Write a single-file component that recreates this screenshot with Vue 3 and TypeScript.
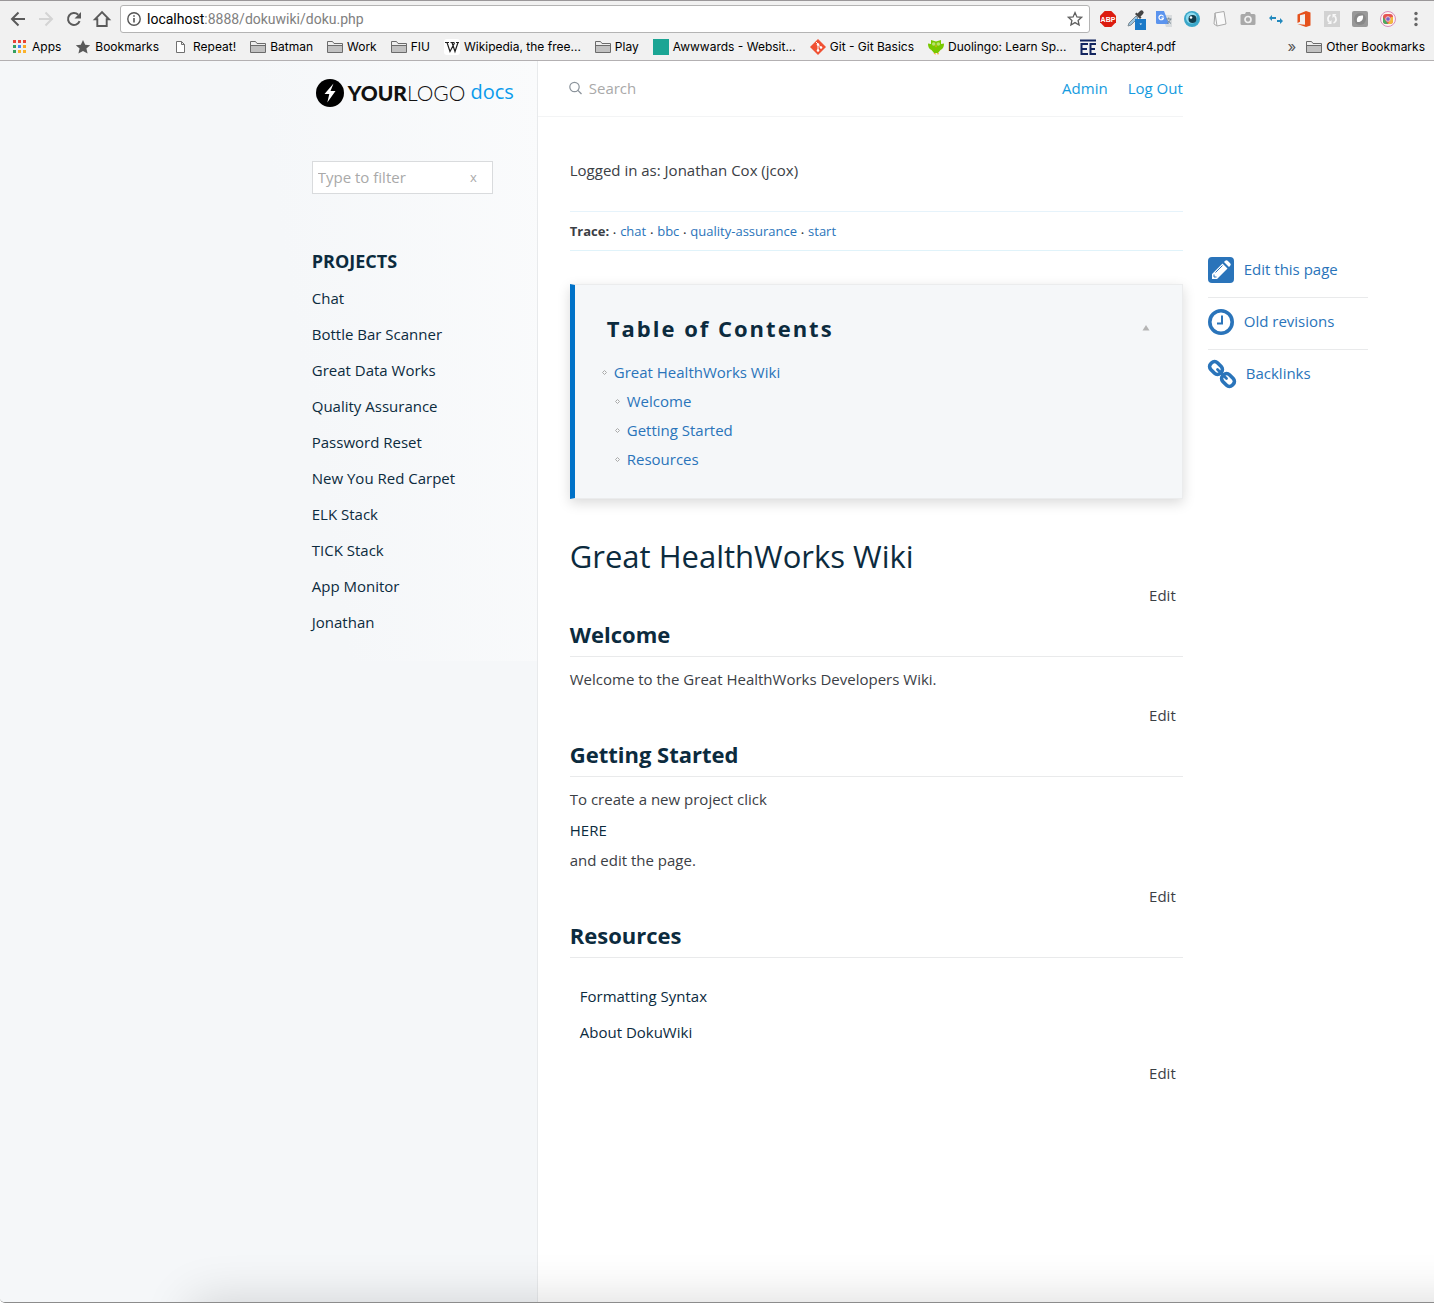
<script setup lang="ts">
import { ref } from 'vue'

interface Bookmark {
  label: string
  icon: string
}

const url = ref('')
const search = ref('')
const filter = ref('')

const bookmarks: Bookmark[] = [
  { label: 'Apps', icon: 'apps' },
  { label: 'Bookmarks', icon: 'star' },
  { label: 'Repeat!', icon: 'page' },
  { label: 'Batman', icon: 'folder' },
  { label: 'Work', icon: 'folder' },
  { label: 'FIU', icon: 'folder' },
  { label: 'Wikipedia, the free...', icon: 'wiki' },
  { label: 'Play', icon: 'folder' },
  { label: 'Awwwards - Websit...', icon: 'teal' },
  { label: 'Git - Git Basics', icon: 'git' },
  { label: 'Duolingo: Learn Sp...', icon: 'duo' },
  { label: 'Chapter4.pdf', icon: 'ee' },
]

const extensions: string[] = [
  'AdBlock', 'Eye dropper', 'Translate', 'Eye', 'Notes', 'Camera',
  'Arrows', 'Office', 'Refresh', 'Leaf', 'Lens', 'Menu',
]

const appColors: string[] = [
  '#ea4335', '#ea4335', '#ea4335', '#34a060', '#4285f4', '#f9a825', '#34a060', '#fbb22b', '#fbb22b',
]

const projects: string[] = [
  'Chat', 'Bottle Bar Scanner', 'Great Data Works', 'Quality Assurance', 'Password Reset',
  'New You Red Carpet', 'ELK Stack', 'TICK Stack', 'App Monitor', 'Jonathan',
]

const trace: string[] = ['chat', 'bbc', 'quality-assurance', 'start']
const tocItems: string[] = ['Welcome', 'Getting Started', 'Resources']
</script>

<template>
  <div class="window">
    <header class="chrome">
      <div class="toolbar">
        <button class="cell" aria-label="Back">
          <svg width="16" height="16" viewBox="0 0 16 16"><path d="M15 8H2.500M8.500 1.500L2 8l6.500 6.500" fill="none" stroke="#5a5a5a" stroke-width="2" /></svg>
        </button>
        <button class="cell" aria-label="Forward">
          <svg width="16" height="16" viewBox="0 0 16 16"><path d="M1 8h12.500M7.500 1.500L14 8l-6.500 6.500" fill="none" stroke="#d4d4d4" stroke-width="2" /></svg>
        </button>
        <button class="cell" aria-label="Reload">
          <svg width="16" height="16" viewBox="0 0 16 16"><path d="M13.600 10.200A6 6 0 1 1 12.200 3.700" fill="none" stroke="#5a5a5a" stroke-width="2" /><path d="M15 1v6.500H8.500z" fill="#5a5a5a" /></svg>
        </button>
        <button class="cell" aria-label="Home">
          <svg width="18" height="18" viewBox="0 0 18 18"><path d="M9 2.200L2 9.300h2.300V16h9.400V9.300H16z" fill="none" stroke="#5a5a5a" stroke-width="1.900" /></svg>
        </button>
        <div class="omnibox">
          <svg width="14" height="14" viewBox="0 0 14 14"><circle cx="7" cy="7" r="6.200" fill="none" stroke="#555" stroke-width="1.400" /><path d="M7 6v4.500M7 3.300v1.500" stroke="#555" stroke-width="1.600" /></svg>
          <label class="address">
            <span>localhost<i>:8888/dokuwiki/doku.php</i></span>
            <input v-model="url" aria-label="Address" />
          </label>
          <button class="bare" aria-label="Bookmark this page">
            <svg width="16" height="16" viewBox="0 0 16 16"><path d="M8 1.600l1.900 4.300 4.700.4-3.500 3.100 1 4.600L8 11.600 3.900 14l1-4.600L1.400 6.300l4.700-.4z" fill="none" stroke="#5f5f5f" stroke-width="1.300" /></svg>
          </button>
        </div>
        <div class="extensions">
          <button v-for="(name, i) in extensions" :key="name" class="cell" :aria-label="name">
            <svg width="20" height="20" viewBox="0 0 20 20">
              <g v-if="i === 0">
                <path d="M6.700 2h6.600L18 6.700v6.600L13.300 18H6.700L2 13.300V6.700z" fill="#dc1c10" />
                <text x="10" y="12.800" font-size="7" font-weight="700" text-anchor="middle" fill="#fff" font-family="Liberation Sans, sans-serif">ABP</text>
              </g>
              <g v-else-if="i === 1">
                <path d="M2 17l1-3 7-7 2 2-7 7z" fill="#9cc4df" stroke="#7c8b95" />
                <path d="M9 5l5 5 1.500-1.500-1-1L17 5a2 2 0 0 0-3-3l-2.500 2.500-1-1z" fill="#444" />
                <path d="M9 10h11v11H9z" fill="#1b7ac8" /><path d="M13.500 14.500h2.500l-1.200 1.600z" fill="#fff" />
              </g>
              <g v-else-if="i === 2">
                <path d="M8 6h10v12h-6z" fill="#d9dcde" />
                <path d="M2 2h8l5 13H3.500A1.500 1.500 0 0 1 2 13.500z" fill="#5b94ee" />
                <path d="M9.400 7.600A2.300 2.300 0 1 0 9.500 9H7.300" fill="none" stroke="#fff" stroke-width="1.200" />
                <path d="M12 10h5.500M14.700 8.500V10M16.500 10c-.5 2-2 3.500-3.500 4.500M13.500 11.500l3.500 3" stroke="#7a8a95" fill="none" />
              </g>
              <g v-else-if="i === 3">
                <circle cx="10" cy="10" r="8" fill="#3aa7c9" /><circle cx="9.500" cy="9" r="5.500" fill="#8edcf0" />
                <circle cx="10.500" cy="10" r="4" fill="#123d4c" /><circle cx="9" cy="8.500" r="1.300" fill="#fff" />
              </g>
              <path v-else-if="i === 4" d="M5 4l9-1.500 2 12.500-9 2zM5 4L4 15l3 2" fill="#fafafa" stroke="#aaa" />
              <g v-else-if="i === 5">
                <path d="M4 5h3l1-2h4l1 2h3a1.500 1.500 0 0 1 1.500 1.500v8A1.500 1.500 0 0 1 16 16H4a1.500 1.500 0 0 1-1.500-1.500v-8A1.500 1.500 0 0 1 4 5z" fill="#a9a9a9" />
                <circle cx="10" cy="10.500" r="3" fill="none" stroke="#f1f1f1" stroke-width="1.700" />
              </g>
              <path v-else-if="i === 6" d="M10 8H6V6L3 9l3 3v-2h4zM11 11h3V9l3 3-3 3v-2h-3z" fill="#2389bd" />
              <path v-else-if="i === 7" d="M3.500 5.500L12 2l4.500 1.500v13L12 18l-8.500-3 7.500.8V5L6 6.300v6.500l-2.500 1.200z" fill="#e5521d" />
              <g v-else-if="i === 8">
                <path d="M2 2h16v16H2z" fill="#d2d2d2" />
                <path d="M8.500 6C5.500 7 5 11 7.500 13M11.500 14C14.500 13 15 9 12.500 7" stroke="#f8f8f8" stroke-width="1.800" fill="none" />
                <path d="M9.500 11v4H5.500zM10.500 9V5h4z" fill="#f8f8f8" />
              </g>
              <g v-else-if="i === 9">
                <rect x="2" y="2" width="16" height="16" rx="2" fill="#999" /><circle cx="10" cy="10" r="6" fill="#888" />
                <path d="M7.200 13c-1.200-4 .8-7 5.800-6.500.5 4.500-2 7-5.800 6.500z" fill="#fff" />
              </g>
              <g v-else-if="i === 10">
                <circle cx="10" cy="10" r="7.500" fill="#fdf3f0" stroke="#d98cba" />
                <rect x="5" y="5" width="10" height="10" rx="3" fill="#e65452" /><path d="M5 8l5 7H8a3 3 0 0 1-3-3z" fill="#45ad62" /><path d="M15 8v4a3 3 0 0 1-3 3h-2l3-7z" fill="#f1bc3c" />
                <circle cx="10" cy="10" r="2.300" fill="#7a62c9" stroke="#e9c6d0" />
              </g>
              <g v-else fill="#666"><circle cx="10" cy="4.500" r="1.700" /><circle cx="10" cy="10" r="1.700" /><circle cx="10" cy="15.500" r="1.700" /></g>
            </svg>
          </button>
        </div>
      </div>
      <nav class="bookmarks">
        <a v-for="b in bookmarks" :key="b.label" href="#" class="bookmark">
          <svg width="16" height="16" viewBox="0 0 16 16">
            <g v-if="b.icon === 'apps'">
              <rect v-for="(c, i) in appColors" :key="i" :x="1 + (i % 3) * 5" :y="1 + Math.floor(i / 3) * 5" width="3" height="3" :fill="c" />
            </g>
            <path v-else-if="b.icon === 'star'" d="M8 1l2.200 4.700 5 .5-3.800 3.400 1.200 5L8 12l-4.600 2.600 1.200-5L.8 6.200l5-.5z" fill="#595959" />
            <path v-else-if="b.icon === 'page'" d="M3.500 2.500h5l3 3v8h-8zM8.500 2.500v3h3" fill="#fff" stroke="#707070" />
            <g v-else-if="b.icon === 'folder'">
              <path d="M.5 13.500v-11h5l1.500 2h8.500v9z" fill="#eee" stroke="#6b6b6b" /><path d="M1 7h14v6H1z" fill="#c1c1c1" /><path d="M1 6.500h14" stroke="#6b6b6b" />
            </g>
            <g v-else-if="b.icon === 'wiki'">
              <rect width="16" height="16" rx="3" fill="#fff" />
              <path d="M1 3.500h4M6.500 3.500h4M12 3.500h3M3 3.500l3 9L10.500 4M8 3.500l3 9 3-9" fill="none" stroke="#222" stroke-width="1.200" />
            </g>
            <path v-else-if="b.icon === 'teal'" d="M0 0h16v16H0z" fill="#1ba594" />
            <g v-else-if="b.icon === 'git'">
              <path d="M8 0l8 8-8 8-8-8z" fill="#f05133" /><path d="M6 3l2 2v6M8 5.500L11 8.500" stroke="#fff" fill="none" /><circle cx="8" cy="5.500" r="1.300" fill="#fff" /><circle cx="8" cy="11.500" r="1.300" fill="#fff" /><circle cx="11" cy="8.500" r="1.300" fill="#fff" />
            </g>
            <g v-else-if="b.icon === 'duo'">
              <path d="M3 1l5 1.500L13 1v4l3-.5c0 4-1.500 5.500-3.500 6.500L10 14H6l-2.500-3C1.500 10 0 8.500 0 4.500L3 5z" fill="#78c800" />
              <circle cx="5.700" cy="5" r="1.800" fill="#b9e36a" /><circle cx="10.300" cy="5" r="1.800" fill="#b9e36a" /><path d="M7 6.500h2L8 8.500zM5.500 14h2v2zM9 14h2l-1 2z" fill="#f5a623" />
            </g>
            <path v-else d="M0 1.500h16M8 5H1.500v10H8M1.500 10H7M16 5h-5.500v10H16M10.500 10H15" fill="none" stroke="#13255f" stroke-width="2" />
          </svg>
          <span>{{ b.label }}</span>
        </a>
        <button class="more bare" aria-label="More bookmarks">»</button>
        <a href="#" class="bookmark other">
          <svg width="16" height="16" viewBox="0 0 16 16"><path d="M.5 13.500v-11h5l1.500 2h8.500v9z" fill="#eee" stroke="#6b6b6b" /><path d="M1 7h14v6H1z" fill="#c1c1c1" /><path d="M1 6.500h14" stroke="#6b6b6b" /></svg>
          <span>Other Bookmarks</span>
        </a>
      </nav>
    </header>

    <div class="site">
      <aside class="sidebar">
        <div class="sidebar-inner">
          <a href="#" class="logo">
            <svg width="28" height="28" viewBox="0 0 28 28"><circle cx="14" cy="14" r="14" fill="#000" /><path d="M17.500 4.500L8.500 15h4.800l-2 8.500L19.500 12h-5z" fill="#fff" /></svg>
            <span class="wordmark"><b>YOUR</b>LOGO</span>
            <span class="docs">docs</span>
          </a>
          <form class="filter" @submit.prevent>
            <input v-model="filter" placeholder="Type to filter" aria-label="Type to filter" />
            <button class="bare" type="button" @click="filter = ''">x</button>
          </form>
          <h4>PROJECTS</h4>
          <ul class="projects">
            <li v-for="p in projects" :key="p"><a href="#">{{ p }}</a></li>
          </ul>
        </div>
      </aside>

      <main class="content">
        <div class="topbar">
          <label class="search">
            <svg width="14" height="14" viewBox="0 0 14 14"><circle cx="5.500" cy="6" r="4.700" fill="none" stroke="#8b939b" stroke-width="1.200" /><path d="M8.900 9.400L12.500 13" stroke="#8b939b" stroke-width="1.300" /></svg>
            <input v-model="search" placeholder="Search" aria-label="Search" />
          </label>
          <nav class="account"><a href="#">Admin</a><a href="#">Log Out</a></nav>
        </div>

        <div class="body">
          <p class="user">Logged in as: Jonathan Cox (jcox)</p>
          <div class="trace">
            <b>Trace:</b>
            <span v-for="t in trace" :key="t"><i>•</i><a href="#">{{ t }}</a></span>
          </div>

          <section class="toc">
            <div class="toc-head">
              <h3>Table of Contents</h3>
              <button class="bare" aria-label="Collapse">
                <svg width="8" height="6" viewBox="0 0 8 6"><path d="M4 0l3.500 5.500h-7z" fill="#b5b5b5" /></svg>
              </button>
            </div>
            <ul>
              <li>
                <svg width="5" height="5" viewBox="0 0 5 5"><path d="M2.500.5l2 2-2 2-2-2z" fill="none" stroke="#aaa" /></svg>
                <a href="#">Great HealthWorks Wiki</a>
              </li>
              <li v-for="t in tocItems" :key="t" class="nested">
                <svg width="5" height="5" viewBox="0 0 5 5"><path d="M2.500.5l2 2-2 2-2-2z" fill="none" stroke="#aaa" /></svg>
                <a href="#">{{ t }}</a>
              </li>
            </ul>
          </section>

          <h1>Great HealthWorks Wiki</h1>
          <button class="edit">Edit</button>

          <h2>Welcome</h2>
          <p>Welcome to the Great HealthWorks Developers Wiki.</p>
          <button class="edit">Edit</button>

          <h2>Getting Started</h2>
          <p>To create a new project click</p>
          <p class="follow"><a href="#">HERE</a></p>
          <p class="follow">and edit the page.</p>
          <button class="edit">Edit</button>

          <h2>Resources</h2>
          <ul class="resources">
            <li><a href="#">Formatting Syntax</a></li>
            <li><a href="#">About DokuWiki</a></li>
          </ul>
          <button class="edit">Edit</button>
        </div>
      </main>

      <nav class="tools">
        <a href="#">
          <svg width="26" height="26" viewBox="0 0 26 26"><rect width="26" height="26" rx="4" fill="#2a74ba" /><path d="M4 22v-5L14.500 6.500l5 5L9 22zM16 5l1.200-1.200a1.800 1.800 0 0 1 2.500 0l2.500 2.500a1.800 1.800 0 0 1 0 2.500L21 10z" fill="#fff" /><path d="M7.500 15.500l7-7" stroke="#2a74ba" /><path d="M6 17.500v2.500h2.500" stroke="#2a74ba" fill="none" /></svg>
          <span>Edit this page</span>
        </a>
        <a href="#">
          <svg width="26" height="26" viewBox="0 0 26 26"><circle cx="13" cy="13" r="11.200" fill="none" stroke="#2a74ba" stroke-width="3.600" /><path d="M14 6.500V14.500H9" fill="none" stroke="#2a74ba" stroke-width="2" /></svg>
          <span>Old revisions</span>
        </a>
        <a href="#">
          <svg width="28" height="28" viewBox="0 0 28 28"><g fill="none" stroke="#2a74ba" stroke-width="3.600"><rect x="1.300" y="3.300" width="13.400" height="9.400" rx="4" transform="rotate(45 8 8)" /><rect x="13.300" y="15.300" width="13.400" height="9.400" rx="4" transform="rotate(45 20 20)" /><path d="M9.500 9.500l9 9" stroke-width="2.800" stroke-linecap="round" /></g></svg>
          <span>Backlinks</span>
        </a>
      </nav>
    </div>
  </div>
</template>

<style>
body {
  margin: 0;
  background: #fff;
}
</style>

<style scoped>
.window {
  position: relative;
  display: flex;
  flex-direction: column;
  min-height: 100vh;
  box-sizing: border-box;
  overflow: hidden;
  border-bottom: 1px solid #8c8c8c;
  border-bottom-left-radius: 5px;
  color: #3b4045;
  font: 15px/24px "Open Sans", sans-serif;
}
/* soft shadow cast along the lower edge of the window */
.window::after {
  content: "";
  position: absolute;
  left: 192px;
  right: -80px;
  bottom: -80px;
  height: 80px;
  box-shadow: 0 0 50px rgba(0, 0, 0, 0.16);
  pointer-events: none;
}
a {
  color: inherit;
  text-decoration: none;
}
ul {
  list-style: none;
  margin: 0;
  padding: 0;
}
h1, h2, h3, h4, p {
  margin: 0;
}
i {
  font-style: normal;
}
svg {
  display: block;
  flex: none;
  overflow: visible;
}
input {
  min-width: 0;
  border: 0;
  padding: 0;
  outline: 0;
  background: transparent;
  color: inherit;
  font: inherit;
}
input::placeholder {
  color: #a9a9a9;
  opacity: 1;
}
button {
  border: 0;
  padding: 0;
  background: none;
  color: inherit;
  font: inherit;
}

.chrome {
  background: #f1f1f1;
  border-top: 1px solid #9a9799;
  border-bottom: 1px solid #b3b0b2;
  color: #000;
}
.toolbar {
  display: flex;
  align-items: center;
  padding: 4px 4px 0;
}
.cell {
  display: flex;
  align-items: center;
  justify-content: center;
  width: 28px;
  height: 28px;
}
.omnibox {
  display: flex;
  flex: 1;
  align-items: center;
  gap: 6px;
  height: 28px;
  margin: 0 4px;
  padding: 0 6px;
  box-sizing: border-box;
  border: 1px solid #b4b4b4;
  border-radius: 3px;
  background: #fff;
}
.address {
  display: flex;
  flex: 1;
  font: 14px/18px Roboto, sans-serif;
}
.address span {
  padding-right: 4px;
}
.address i {
  color: #808080;
}
.address input {
  flex: 1;
}
.extensions {
  display: flex;
}
.bookmarks {
  display: flex;
  align-items: center;
  gap: 14px;
  height: 27px;
  padding: 0 9px 0 12px;
  font: 12px/16px Inter, sans-serif;
}
.bookmark {
  display: flex;
  align-items: center;
  gap: 4px;
  white-space: nowrap;
}
.more {
  margin-left: auto;
  margin-right: -4px;
  color: #555;
  font-size: 15px;
}

.site {
  display: flex;
  flex: 1;
}
.sidebar {
  display: flex;
  justify-content: flex-end;
  width: 37.5%;
  box-sizing: border-box;
  border-right: 1px solid #e8eaec;
  background: linear-gradient(81deg, #f5f7f9 55%, #fafbfc) 0 0 / 100% 600px no-repeat #f5f7f9;
  color: #0c2b3e;
}
.sidebar-inner {
  width: 225px;
  padding-top: 18px;
}
.logo {
  display: flex;
  align-items: center;
  height: 28px;
  padding-left: 4px;
}
.wordmark {
  margin: 0 5px 0 4px;
  color: #111;
  font: 300 21px/28px Lato, sans-serif;
}
.wordmark b {
  font-weight: 900;
}
.docs {
  padding-bottom: 2px;
  color: #0b9bec;
  font-size: 20px;
}
.filter {
  display: flex;
  width: 181px;
  height: 33px;
  margin-top: 54px;
  padding: 0 15px 2px 5px;
  box-sizing: border-box;
  border: 1px solid #d9dbdd;
  background: #fff;
}
.filter input {
  flex: 1;
}
.filter button {
  color: #aaa;
  font-size: 13px;
}
h4 {
  margin-top: 55px;
  font-size: 18px;
  line-height: 24px;
}
.projects {
  display: grid;
  gap: 12px;
  margin-top: 13px;
}

.content {
  flex: 0 1 645px;
}
.topbar {
  display: flex;
  justify-content: space-between;
  align-items: center;
  height: 53px;
  padding: 0 0 2px 31px;
  border-bottom: 1px solid #f3f4f5;
}
.search {
  display: flex;
  align-items: center;
  gap: 6px;
}
.account {
  display: flex;
  gap: 20px;
  color: #159be0;
}
.body {
  display: flex;
  flex-direction: column;
  padding: 41px 0 60px 32px;
}
.trace {
  display: flex;
  margin-top: 29px;
  padding: 7px 0;
  border-top: 1px solid #e6f3fb;
  border-bottom: 1px solid #e0f3fa;
  font-size: 13px;
}
.trace i {
  padding: 0 4px;
  font-size: 8px;
  line-height: 8px;
}
.trace a,
.toc a,
.tools {
  color: #2a74ba;
}
.toc {
  margin-top: 33px;
  padding: 27px 32px 24px 27px;
  border: 1px solid #ebeced;
  border-left: 5px solid #0072c8;
  background: #f5f7f9;
  box-shadow: 0 4px 12px rgba(0, 0, 0, 0.15);
}
.toc-head {
  display: flex;
  align-items: center;
  justify-content: space-between;
  padding-left: 5px;
}
h3 {
  color: #0c2b3e;
  font-size: 22px;
  line-height: 32px;
  letter-spacing: 2px;
}
.toc ul {
  margin-top: 14px;
}
.toc li {
  display: flex;
  align-items: center;
  gap: 7px;
  line-height: 29px;
}
.toc .nested {
  padding-left: 13px;
}
h1 {
  margin-top: 37px;
  color: #0c2b3e;
  font-size: 31px;
  font-weight: 400;
  line-height: 40px;
}
.edit {
  align-self: flex-end;
  margin: 12px 7px 0 0;
}
h1 + .edit {
  margin-top: 7px;
}
h2 {
  margin: 12px 0 10px;
  padding-bottom: 7px;
  border-bottom: 1px solid #e9eaeb;
  color: #0c2b3e;
  font-size: 22px;
  line-height: 30px;
}
.follow {
  margin-top: 7px;
}
.follow + .follow {
  margin-top: 6px;
}
.follow a,
.resources {
  color: #0c2b3e;
}
.resources {
  display: grid;
  gap: 12px;
  padding: 16px 10px 5px;
}
.tools {
  width: 160px;
  margin: 185px 0 0 25px;
}
.tools a {
  display: flex;
  align-items: center;
  gap: 10px;
  height: 48px;
  padding-bottom: 3px;
}
.tools span {
  padding-bottom: 2px;
}
.tools a + a {
  border-top: 1px solid #e9eaeb;
}
</style>
